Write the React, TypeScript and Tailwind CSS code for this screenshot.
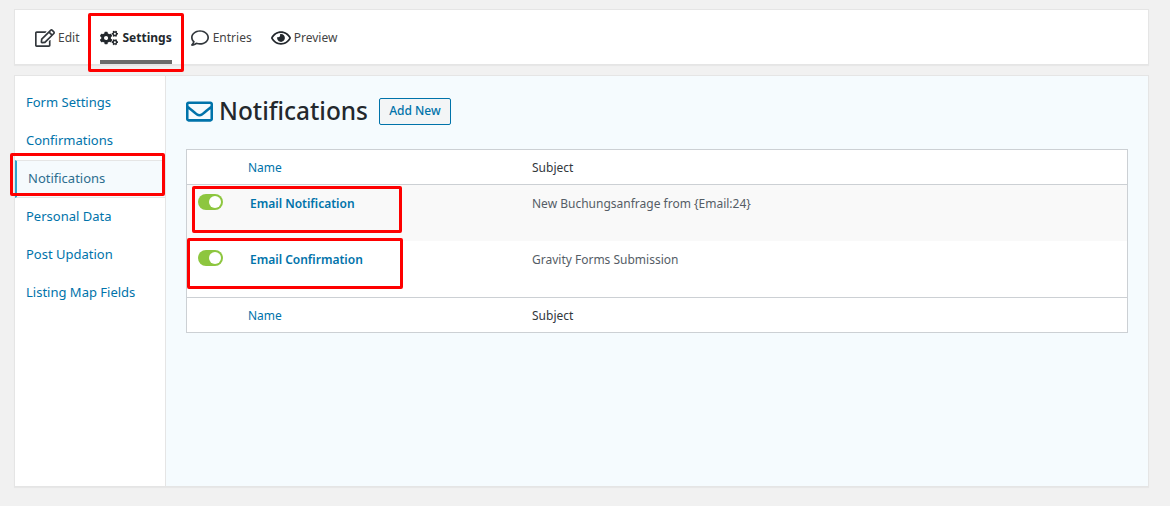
import { FaCogs, FaRegComment, FaRegEdit, FaRegEnvelope, FaRegEye } from "react-icons/fa";

const sideLinks = ["Form Settings", "Confirmations", "Notifications", "Personal Data", "Post Updation", "Listing Map Fields"];

function RedBox({ className }: { className: string }) {
  return <div className={`absolute border-[3px] border-[#fe0000] rounded-[2px] pointer-events-none ${className}`} />;
}

function Toggle() {
  return (
    <div className="w-[25px] h-[16px] rounded-full bg-[#8dc63f] flex items-center justify-end pr-[2px]">
      <div className="w-[12px] h-[12px] rounded-full bg-white" />
    </div>
  );
}

function HeadRow({ border }: { border: string }) {
  return (
    <div className={`flex h-[35px] items-center bg-white pt-[2px] text-[12px] ${border}`}>
      <div className="w-[61px]" />
      <div className="w-[284px] text-[#0073aa]">Name</div>
      <div className="text-[#32373c]">Subject</div>
    </div>
  );
}

function NotificationRow({ name, subject, shaded }: { name: string; subject: string; shaded?: boolean }) {
  return (
    <div className={`flex h-[56px] text-[12px] ${shaded ? "bg-[#f9f9f9]" : "bg-white"}`}>
      <div className="w-[63px] pl-[11px] pt-[9px]">
        <Toggle />
      </div>
      <div className="w-[282px] pt-[10px] font-semibold text-[#0073aa] leading-[18px]">{name}</div>
      <div className="pt-[10px] text-[#555d66] leading-[18px]">{subject}</div>
    </div>
  );
}

export default function App() {
  return (
    <div className="relative h-[506px] w-[1170px] overflow-hidden bg-[#f1f1f1] pl-[14px] pr-[21px] pt-[9px] font-['Noto_Sans','Open_Sans',sans-serif]">
      {/* Top toolbar */}
      <div className="flex h-[56px] items-start border border-[#e5e5e5] bg-white pl-[20px] text-[12px] text-[#444] shadow-[0_1px_1px_rgba(0,0,0,0.04)]">
        <div className="flex h-[54px] items-center gap-[3px] pr-[21px] pt-[2px]">
          <FaRegEdit className="h-[18px] w-[20px] text-[#32373c]" />
          <span>Edit</span>
        </div>
        <div className="flex h-[54px] items-center gap-[4px] border-b-[4px] border-[#6b6b6b] pt-[6px] font-bold text-[#23282d]">
          <FaCogs className="h-[18px] w-[18px]" />
          <span>Settings</span>
        </div>
        <div className="flex h-[54px] items-center gap-[4px] pl-[19px] pr-[19px] pt-[2px]">
          <FaRegComment className="h-[18px] w-[18px] text-[#32373c]" />
          <span>Entries</span>
        </div>
        <div className="flex h-[54px] items-center gap-[3px] pt-[2px]">
          <FaRegEye className="h-[18px] w-[20px] text-[#23282d]" />
          <span>Preview</span>
        </div>
      </div>

      {/* Main panel */}
      <div className="mt-[10px] flex h-[412px] border border-[#e5e5e5] shadow-[0_1px_1px_rgba(0,0,0,0.04)]">
        <div className="w-[151px] shrink-0 border-r border-[#e5e5e5] bg-white pt-[8px] text-[13px] text-[#0073aa]">
          {sideLinks.map((link) =>
            link === "Notifications" ? (
              <div key={link} className="flex h-[38px] items-center border-y border-[#e5e5e5] border-l-2 border-l-[#2ea2cc] bg-[#f5fafd] pl-[11px] text-[#2c6e8f]">
                {link}
              </div>
            ) : (
              <div key={link} className="flex h-[38px] items-center pl-[11px]">
                {link}
              </div>
            ),
          )}
        </div>

        <div className="flex-1 bg-[#f5fbfe] pl-[20px] pr-[20px] pt-[20px]">
          <div className="flex h-[30px] items-center">
            <FaRegEnvelope className="h-[27px] w-[27px] text-[#0073aa]" />
            <h1 className="ml-[6px] text-[24.4px] font-medium text-[#23282d]">Notifications</h1>
            <button className="ml-[11px] h-[27px] w-[72px] rounded-[2px] border border-[#0073aa] bg-[#f3f5f6] text-[12px] font-medium text-[#0073aa]">
              Add New
            </button>
          </div>

          <div className="mt-[23px] border border-[#ccd0d4] bg-white">
            <HeadRow border="border-b border-[#ccd0d4]" />
            <NotificationRow name="Email Notification" subject="New Buchungsanfrage from {Email:24}" shaded />
            <NotificationRow name="Email Confirmation" subject="Gravity Forms Submission" />
            <HeadRow border="border-t border-[#ccd0d4]" />
          </div>
        </div>
      </div>

      {/* Annotations */}
      <RedBox className="left-[88px] top-[13px] h-[59px] w-[96px]" />
      <RedBox className="left-[10px] top-[153px] h-[43px] w-[155px]" />
      <RedBox className="left-[192px] top-[186px] h-[47px] w-[210px]" />
      <RedBox className="left-[187px] top-[238px] h-[51px] w-[216px]" />
    </div>
  );
}
